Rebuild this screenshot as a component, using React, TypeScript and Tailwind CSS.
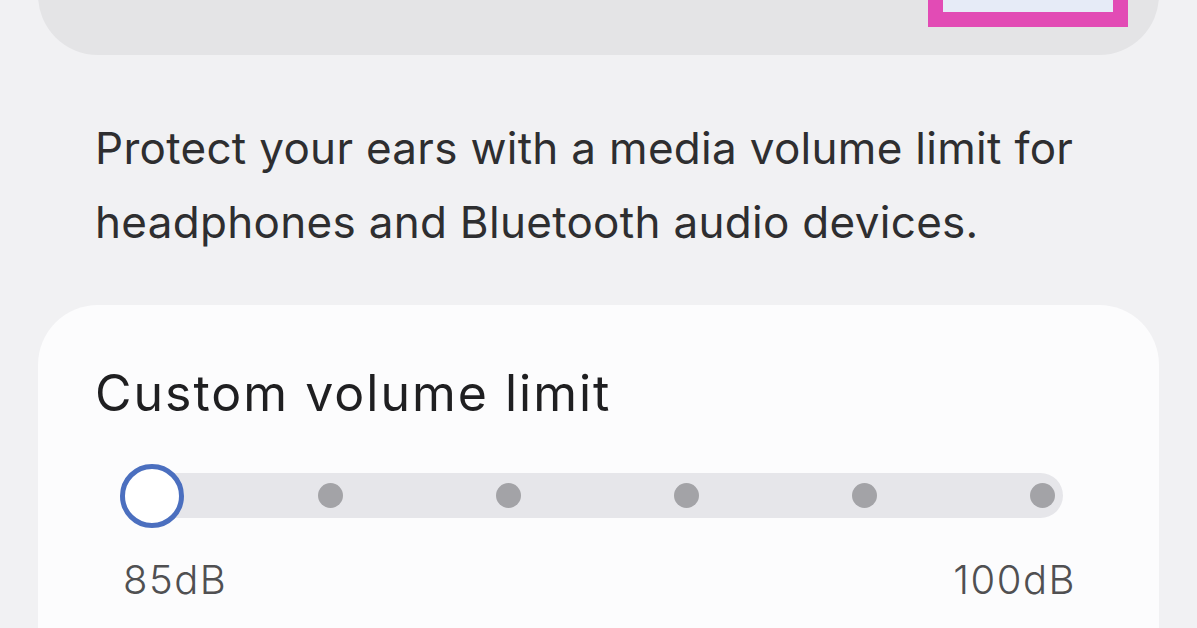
import React from 'react';

const STOPS = 6;

function VolumeSlider() {
  return (
    <div className="ml-[25px] w-[943px]">
      <div className="flex h-[45px] items-center rounded-full bg-[#e6e6ea]">
        <div className="flex w-[955px] shrink-0 items-center justify-between">
          {Array.from({ length: STOPS }).map((_, i) => (
            <div key={i} className="flex w-[64px] justify-center">
              {i === 0 ? (
                <div className="h-[64px] w-[64px] rounded-full border-[5px] border-[#4b6fbf] bg-white" />
              ) : (
                <div className="h-[25px] w-[25px] rounded-full bg-[#a3a3a7]" />
              )}
            </div>
          ))}
        </div>
      </div>
    </div>
  );
}

export default function App() {
  return (
    <div className="h-[628px] w-full overflow-hidden bg-[#f1f1f3] px-[38px] font-['Inter',sans-serif]">
      {/* header card, mostly scrolled off the top */}
      <div className="-mt-[65px] flex h-[120px] items-end justify-end rounded-[60px] bg-[#e4e4e6] pb-[28px] pr-[31px]">
        <div className="h-[60px] w-[200px] border-[15px] border-[#e24bb5] bg-[#e6ebf7]" />
      </div>

      <p className="mt-[56px] px-[57px] text-[44px] leading-[74px] tracking-[0.3px] text-[#2e2e30]">
        Protect your ears with a media volume limit for
        <br />
        headphones and Bluetooth audio devices.
      </p>

      <div className="mt-[46px] h-[400px] rounded-[60px] bg-[#fcfcfd] pt-[58px]">
        <h2 className="px-[57px] text-[50px] leading-[60px] tracking-[2px] text-[#1f1f21]">Custom volume limit</h2>
        <div className="mt-[50px] px-[57px]">
          <VolumeSlider />
          <div className="ml-[28px] mr-[26px] mt-[38px] flex justify-between text-[40px] font-light leading-[48px] tracking-[1.5px] text-[#505052]">
            <span>85dB</span>
            <span>100dB</span>
          </div>
        </div>
      </div>
    </div>
  );
}
